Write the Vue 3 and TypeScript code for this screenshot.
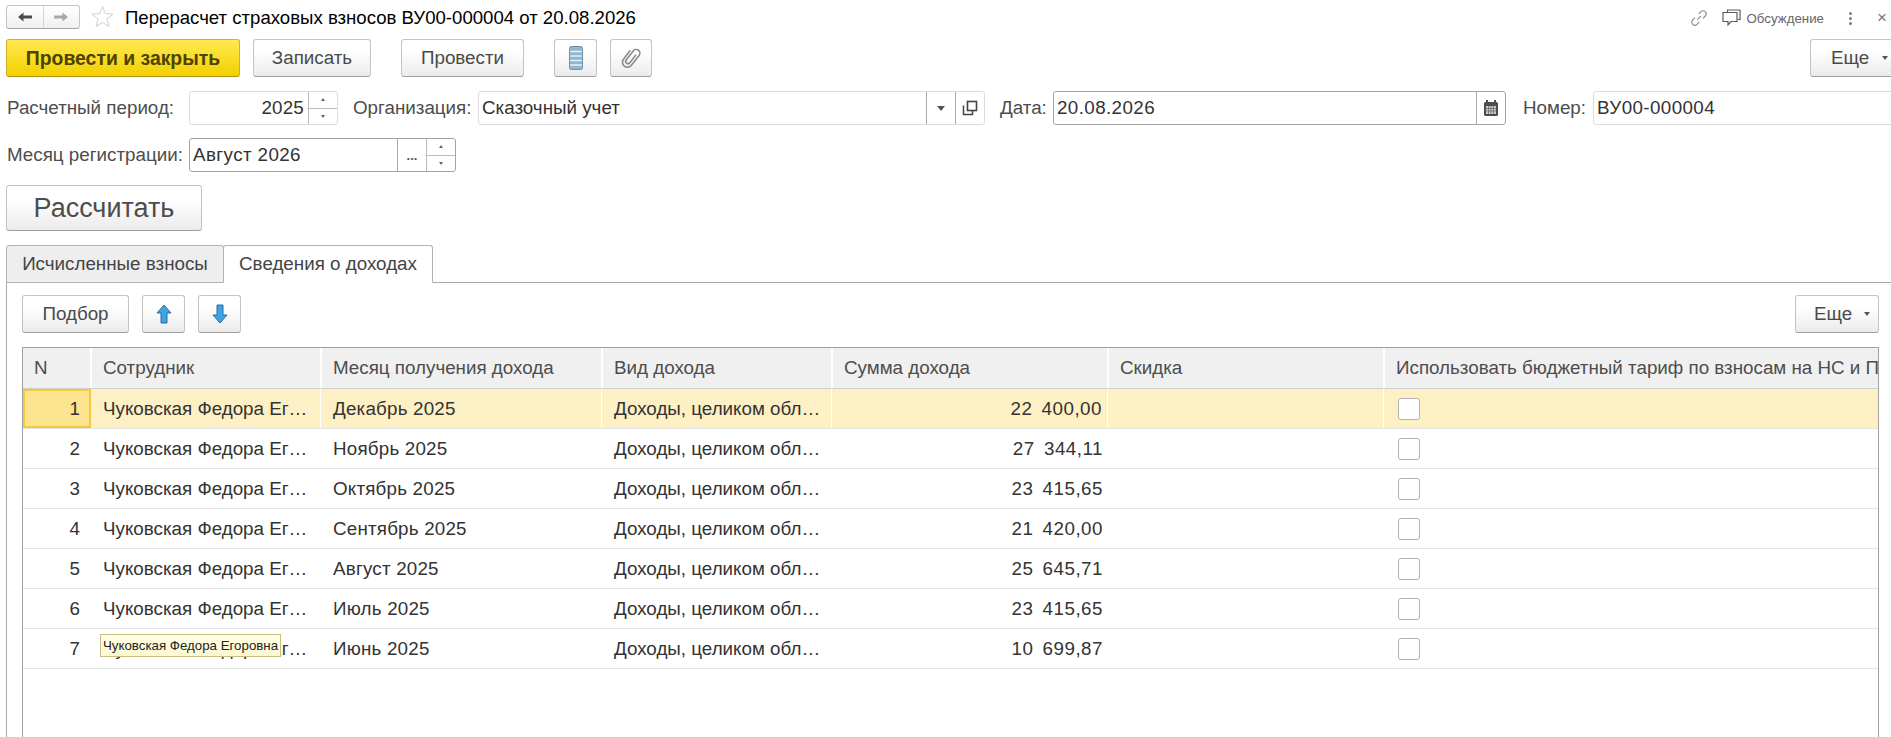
<script setup lang="ts">
interface Row { n: number; name: string; month: string; kind: string; sum: string; sel?: boolean }
const name = 'Чуковская Федора Ег…'
const kind = 'Доходы, целиком обл…'
const rows: Row[] = [
  { n: 1, name, month: 'Декабрь 2025', kind, sum: '22 400,00', sel: true },
  { n: 2, name, month: 'Ноябрь 2025', kind, sum: '27 344,11' },
  { n: 3, name, month: 'Октябрь 2025', kind, sum: '23 415,65' },
  { n: 4, name, month: 'Сентябрь 2025', kind, sum: '21 420,00' },
  { n: 5, name, month: 'Август 2025', kind, sum: '25 645,71' },
  { n: 6, name, month: 'Июль 2025', kind, sum: '23 415,65' },
  { n: 7, name, month: 'Июнь 2025', kind, sum: '10 699,87' },
]
const headers = ['N', 'Сотрудник', 'Месяц получения дохода', 'Вид дохода', 'Сумма дохода', 'Скидка', 'Использовать бюджетный тариф по взносам на НС и ПЗ']
</script>

<template>
  <div class="page">
    <header class="titlebar">
      <div class="nav">
        <button class="nav-btn">
          <svg width="16" height="12" viewBox="0 0 16 12"><path d="M1 6 6.500 1.500V4.600H15V7.400H6.500V10.500Z" fill="#4a4a4a" /></svg>
        </button>
        <button class="nav-btn">
          <svg width="16" height="12" viewBox="0 0 16 12"><path d="M15 6 9.500 1.500V4.600H1V7.400H9.500V10.500Z" fill="#a8a8a8" /></svg>
        </button>
      </div>
      <svg class="star" width="23" height="23" viewBox="0 0 23 23"><path d="M11.500 1.500 14.300 8.600 22 9.100 16 14 18 21.500 11.500 17.400 5 21.500 7 14 1 9.100 8.700 8.600Z" fill="none" stroke="#cfcfcf" /></svg>
      <h1 class="title">Перерасчет страховых взносов ВУ00-000004 от 20.08.2026</h1>
      <div class="title-tools">
        <svg width="18" height="18" viewBox="0 0 18 18" fill="none" stroke="#8c8c8c" stroke-width="1.100"><path d="M7.300 10.700 10.900 7.100M8.700 5 11 2.700a3 3 0 0 1 4.300 4.300L13 9.300M9.300 13 7 15.300A3 3 0 0 1 2.700 11L5 8.700" /></svg>
        <svg class="chat" width="19" height="18" viewBox="0 0 19 18" fill="none" stroke="#5c5c5c" stroke-width="1.200"><path d="M5.500 3V1H18V10.500H16" /><path d="M1 3.500H15V12.500H9L6 16V12.500H1Z" fill="#fff" /></svg>
        <span class="discuss">Обсуждение</span>
        <span class="dots"><i /><i /><i /></span>
        <span class="close">×</span>
      </div>
    </header>

    <div class="cmdbar">
      <button class="btn primary">Провести и закрыть</button>
      <button class="btn w-save">Записать</button>
      <button class="btn w-post">Провести</button>
      <button class="btn w-ico">
        <svg width="14" height="24" viewBox="0 0 14 24"><rect x=".5" y=".5" width="13" height="23" rx="2" fill="#8fb6d3" stroke="#6d8ca5" /><path d="M1 5.500H13M1 10H13M1 14.500H13M1 19H13" stroke="#e6f0f7" stroke-width="1.500" /></svg>
      </button>
      <button class="btn w-ico2">
        <svg width="24" height="24" viewBox="0 0 24 24" fill="none" stroke="#8a8a8a" stroke-width="1.600" stroke-linecap="round"><path d="M13.500 7.500V17a2.300 2.300 0 0 1-4.600 0V5.500a3.700 3.700 0 0 1 7.400 0V18a5 5 0 0 1-10 0V7.500" transform="rotate(38 12 12) translate(0.500 -0.500)" /></svg>
      </button>
      <button class="btn more top-more">Еще <i class="caret" /></button>
    </div>

    <div class="field-row">
      <label class="lbl lbl-first">Расчетный период:</label>
      <div class="input w-period">
        <span class="value right">2025</span>
        <div class="spin"><span class="up" /><span class="down" /></div>
      </div>
      <label class="lbl lbl-org">Организация:</label>
      <div class="input w-org">
        <span class="value">Сказочный учет</span>
        <div class="side"><i class="drop" /></div>
        <div class="side">
          <svg width="16" height="16" viewBox="0 0 16 16" fill="none" stroke="#444" stroke-width="1.500"><path d="M1.500 5.500V14.500H10.500V11" /><rect x="5.500" y="1.500" width="9" height="9" stroke-width="1.600" fill="#fff" /></svg>
        </div>
      </div>
      <label class="lbl lbl-date">Дата:</label>
      <div class="input w-date strong">
        <span class="value digits">20.08.2026</span>
        <div class="side side-cal">
          <svg width="14" height="16" viewBox="0 0 14 16"><rect x="0" y="2" width="14" height="14" rx="1.500" fill="#4d4d4d" /><rect x="2" y="0" width="2" height="4" fill="#4d4d4d" /><rect x="10" y="0" width="2" height="4" fill="#4d4d4d" /><rect x="2" y="6" width="10" height="8" fill="#c9c9c9" /><path d="M2 8.500H12M2 11H12M4.500 6V14M7 6V14M9.500 6V14" stroke="#555" stroke-width=".6" /></svg>
        </div>
      </div>
      <label class="lbl lbl-num">Номер:</label>
      <div class="input w-num"><span class="value digits">ВУ00-000004</span></div>
    </div>

    <div class="field-row second">
      <label class="lbl lbl-first">Месяц регистрации:</label>
      <div class="input w-month strong">
        <span class="value digits">Август 2026</span>
        <div class="side side-dots">...</div>
        <div class="spin"><span class="up" /><span class="down" /></div>
      </div>
    </div>

    <button class="btn calc">Рассчитать</button>

    <div class="tabs">
      <div class="tab">Исчисленные взносы</div>
      <div class="tab active">Сведения о доходах</div>
    </div>

    <section class="panel">
      <div class="toolbar">
        <button class="btn w-pick">Подбор</button>
        <button class="btn w-arrow">
          <svg width="16" height="20" viewBox="0 0 16 20"><path d="M8 1 15 9H11V19H5V9H1Z" fill="#3ea3e6" stroke="#2a6f9e" stroke-linejoin="round" /></svg>
        </button>
        <button class="btn w-arrow">
          <svg width="16" height="20" viewBox="0 0 16 20"><path d="M8 19 15 11H11V1H5V11H1Z" fill="#3ea3e6" stroke="#2a6f9e" stroke-linejoin="round" /></svg>
        </button>
        <button class="btn more table-more">Еще <i class="caret" /></button>
      </div>

      <div class="table">
        <div class="thead">
          <div v-for="h in headers" :key="h" class="th">{{ h }}</div>
        </div>
        <div v-for="r in rows" :key="r.n" class="tr" :class="{ sel: r.sel }">
          <div class="td num" :class="{ current: r.sel }">{{ r.n }}</div>
          <div class="td">{{ r.name }}</div>
          <div class="td month">{{ r.month }}</div>
          <div class="td">{{ r.kind }}</div>
          <div class="td sum">{{ r.sum }}</div>
          <div class="td" />
          <div class="td check"><span class="box" /></div>
        </div>
        <div class="tooltip">Чуковская Федора Егоровна</div>
      </div>
    </section>
  </div>
</template>

<style>
html, body { margin: 0; background: #fff; overflow: hidden; }
</style>

<style scoped>
.page {
  width: 1891px;
  height: 737px;
  overflow: hidden;
  background: #fff;
  font-family: "Liberation Sans", Arial, sans-serif;
  font-size: 18.8px;
  color: #333;
  box-sizing: border-box;
  padding-left: 6px;
}
button { font-family: inherit; padding: 0; margin: 0; }

.titlebar { height: 39px; display: flex; align-items: flex-start; }
.nav {
  margin-top: 5px;
  width: 74px;
  height: 24px;
  box-sizing: border-box;
  display: flex;
  border: 1px solid #c6c6c6;
  border-bottom-color: #a5a5a5;
  border-radius: 3px;
  background: linear-gradient(#fff, #f0f0f0);
}
.nav-btn { flex: 1; border: 0; background: none; display: flex; align-items: center; justify-content: center; }
.nav-btn + .nav-btn { border-left: 1px solid #d4d4d4; }
.star { margin: 5px 0 0 11px; }
.title { margin: 8px 0 0 11px; font-size: 18.6px; line-height: 20px; font-weight: 400; color: #000; white-space: nowrap; }
.title-tools { margin-left: auto; height: 36px; display: flex; align-items: center; color: #666; }
.chat { margin-left: 14px; }
.discuss { margin-left: 6px; font-size: 13.3px; color: #666; }
.dots { margin-left: 25px; display: flex; flex-direction: column; gap: 2px; }
.dots i { width: 3px; height: 3px; background: #7d7d7d; border-radius: 50%; }
.close { margin: 0 3px 0 25px; width: 11px; font-size: 17px; color: #777; }

.cmdbar { height: 38px; display: flex; align-items: stretch; }
.btn {
  box-sizing: border-box;
  height: 38px;
  font-size: 18.8px;
  color: #4a4a4a;
  background: linear-gradient(#fff 30%, #ebebeb);
  border: 1px solid #c4c4c4;
  border-bottom-color: #9e9e9e;
  border-radius: 3px;
  display: inline-flex;
  align-items: center;
  justify-content: center;
  white-space: nowrap;
  flex: none;
}
.primary {
  width: 234px;
  font-size: 19.4px;
  font-weight: 700;
  color: #4c4300;
  background: linear-gradient(#ffea50, #f3d000);
  border-color: #cfb02a;
  border-bottom-color: #b1951b;
}
.w-save { width: 118px; margin-left: 13px; }
.w-post { width: 123px; margin-left: 30px; }
.w-ico { width: 43px; margin-left: 30px; }
.w-ico2 { width: 42px; margin-left: 13px; }
.more { justify-content: flex-start; }
.top-more { width: 90px; margin-left: auto; margin-right: -9px; padding-left: 20px; gap: 13px; }
.caret { width: 0; height: 0; border: 3.500px solid transparent; border-top: 4px solid #555; border-bottom: 0; }

.field-row { margin-top: 14px; height: 34px; display: flex; align-items: stretch; }
.field-row.second { margin-top: 13px; }
.lbl { display: flex; align-items: center; color: #4d4d4d; white-space: nowrap; flex: none; box-sizing: border-box; }
.lbl-first { width: 183px; padding-left: 1px; }
.lbl-org { width: 125px; margin-left: 15px; }
.lbl-date { width: 53px; margin-left: 15px; }
.lbl-num { width: 70px; margin-left: 17px; }

.input {
  box-sizing: border-box;
  display: flex;
  align-items: stretch;
  border: 1px solid #dcdcdc;
  border-radius: 3px;
  background: #fff;
  flex: none;
}
.input.strong { border-color: #a4a4a4; }
.value { flex: 1; min-width: 0; display: flex; align-items: center; padding-left: 3px; color: #333; white-space: nowrap; }
.value.right { justify-content: flex-end; padding: 0 4px 0 0; letter-spacing: .2px; }
.value.digits { letter-spacing: .4px; }
.w-period { width: 149px; }
.w-org { width: 507px; }
.w-date { width: 453px; }
.w-num { width: 320px; }
.w-month { width: 267px; }

.side { width: 29px; flex: none; border-left: 1px solid #a9a9a9; display: flex; align-items: center; justify-content: center; box-sizing: border-box; }
.side-cal { width: 29px; }
.side-dots { font-weight: 700; color: #555; font-size: 13px; letter-spacing: 0; }
.drop { width: 0; height: 0; border: 4px solid transparent; border-top: 5px solid #555; border-bottom: 0; }
.spin { width: 29px; flex: none; display: flex; flex-direction: column; border-left: 1px solid #bbb; box-sizing: border-box; }
.spin span { flex: 1; display: flex; align-items: center; justify-content: center; }
.spin .up { border-bottom: 1px solid #bbb; }
.spin .up::before { content: ""; border: 2px solid transparent; border-bottom: 3px solid #666; border-top: 0; }
.spin .down::before { content: ""; border: 2px solid transparent; border-top: 3px solid #666; border-bottom: 0; }

.calc { display: flex; width: 196px; height: 46px; margin-top: 13px; font-size: 27px; color: #4d4d4d; }

.tabs { margin-top: 14px; height: 38px; display: flex; position: relative; margin-bottom: -1px; }
.tab {
  box-sizing: border-box;
  height: 38px;
  width: 218px;
  display: flex;
  align-items: center;
  justify-content: center;
  background: #eeeeee;
  border: 1px solid #b2b2b2;
  border-radius: 3px 3px 0 0;
  color: #444;
  white-space: nowrap;
}
.tab.active { width: 210px; background: #fff; border-bottom-color: #fff; margin-left: -1px; position: relative; z-index: 1; }

.panel {
  height: 460px;
  box-sizing: border-box;
  margin-right: -10px;
  border-left: 1px solid #a8a8a8;
  border-top: 1px solid #a8a8a8;
  padding: 12px 0 0 15px;
}
.toolbar { width: 1857px; height: 38px; display: flex; }
.w-pick { width: 107px; }
.w-arrow { width: 43px; margin-left: 13px; }
.table-more { width: 84px; margin-left: auto; padding-left: 18px; gap: 12px; }

.table {
  position: relative;
  box-sizing: border-box;
  width: 1857px;
  height: 400px;
  margin-top: 14px;
  border: 1px solid #a0a0a0;
  border-bottom: 0;
  overflow: hidden;
}
.thead, .tr {
  display: grid;
  grid-template-columns: 68px 230px 281px 230px 276px 276px 1fr;
}
.thead { height: 40px; background: #f0f0f0; border-bottom: 1px solid #cfcfcf; }
.th {
  box-sizing: border-box;
  display: flex;
  align-items: center;
  padding-left: 12px;
  border-right: 2px solid #fff;
  color: #4d4d4d;
  white-space: nowrap;
  overflow: hidden;
  margin-right: -1px;
}
.th:first-child { padding-left: 11px; }
.th:last-child { border-right: 0; margin-right: 0; padding-right: 0; }
.tr { height: 40px; box-sizing: border-box; border-bottom: 1px solid #e3e3e3; }
.tr.sel { background: #fdf0c4; }
.td { display: flex; align-items: center; padding-left: 12px; white-space: nowrap; overflow: hidden; box-sizing: border-box; color: #333; }
.td.month { letter-spacing: .2px; }
.tr.sel .td { border-right: 1px solid #fff; }
.tr.sel .td:last-child { border-right: 0; }
.td.num { justify-content: flex-end; padding: 0 11px 0 0; }
.td.current { background: #fde48f; border: 2px solid #f3c93f !important; padding-right: 9px; }
.td.sum { justify-content: flex-end; padding: 0 5px 0 0; word-spacing: 3.500px; letter-spacing: .5px; }
.td.check { padding-left: 14px; }
.box { width: 22px; height: 22px; box-sizing: border-box; background: #fff; border: 1px solid #b3b3b3; border-radius: 3px; }

.tooltip {
  position: absolute;
  left: 77px;
  top: 286px;
  box-sizing: border-box;
  width: 181px;
  height: 23px;
  padding-left: 2px;
  display: flex;
  align-items: center;
  font-size: 13.3px;
  color: #222;
  white-space: nowrap;
  background: linear-gradient(#ffffe6, #fdf8cf);
  border: 1px solid #c5bd85;
}
</style>
